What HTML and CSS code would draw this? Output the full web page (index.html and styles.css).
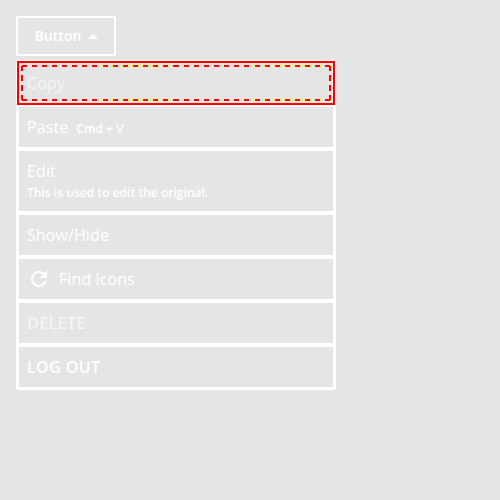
FILE: index.html
```html
<!DOCTYPE html>
<html lang="en">
<head>
<meta charset="utf-8">
<title>Menu</title>
<link rel="stylesheet" href="styles.css">
</head>
<body>
<button class="trigger">Button<svg class="caret" width="10" height="5" viewBox="0 0 10 5"><path d="M0 5L5 0l5 5z"/></svg></button>
<ul class="menu">
  <li class="item focused dim">Copy<svg class="ring" width="310" height="36" viewBox="0 0 310 36" aria-hidden="true"><path class="halo"/><path class="dash"/></svg></li>
  <li class="item">Paste<span class="shortcut">Cmd + V</span></li>
  <li class="item stacked">Edit<span class="description">This is used to edit the original.</span></li>
  <li class="item">Show/Hide</li>
  <li class="item"><svg class="icon" width="24" height="24" viewBox="0 0 24 24"><path d="M17.65 6.35A7.96 7.96 0 0 0 12 4a8 8 0 1 0 7.73 10h-2.08A6 6 0 1 1 12 6c1.66 0 3.14.69 4.22 1.78L13 11h7V4z"/></svg>Find icons</li>
  <li class="item strong dim">DELETE</li>
  <li class="item strong">LOG OUT</li>
</ul>
<script src="ring.js"></script>
</body>
</html>
```
FILE: ring.js
```js
// Dashes snap to whole pixels; the partly covered pixel at either end is the halo.
const rect = (x, y, w, h) => `M${x} ${y}h${w}v${h}h${-w}z`;
let halo = '', dash = '';
for (let k = 0; k < 31; k++) {
  const start = k * 304 / 30;
  const end = start + 6;
  const left = Math.ceil(start - 0.001);
  const right = Math.floor(end + 0.001);
  for (const y of [0, 34]) {
    dash += rect(left, y, right - left, 2);
    if (left - start > 0.22) halo += rect(left - 1, y, 1, 2);
    if (end - right > 0.22) halo += rect(right, y, 1, 2);
  }
}
for (let y = 0; y < 36; y += 10) {
  dash += rect(0, y, 2, 6) + rect(308, y, 2, 6);
}
document.querySelector('.dash').setAttribute('d', dash);
document.querySelector('.halo').setAttribute('d', halo);
const corners = document.createElementNS('http://www.w3.org/2000/svg', 'path');
corners.setAttribute('class', 'halo');
corners.setAttribute('d', [[0, 0], [309, 0], [0, 35], [309, 35]].map(([x, y]) => rect(x, y, 1, 1)).join(''));
document.querySelector('.ring').append(corners);
```
FILE: styles.css
```css
* { box-sizing: border-box; }
body {
  margin: 0;
  padding: 16px;
  background: #e5e5e5;
  color: #fff;
  font-family: "Open Sans", sans-serif;
}
.trigger {
  display: flex;
  align-items: center;
  justify-content: center;
  gap: 6px;
  width: 100px;
  height: 40px;
  padding: 0;
  border: 2px solid #fff;
  border-radius: 2px;
  background: transparent;
  color: inherit;
  font: 600 14px/20px "Open Sans", sans-serif;
  letter-spacing: 0.06px;
}
.caret, .icon { fill: currentColor; }
.menu {
  width: 320px;
  margin: 4px 0 0;
  padding: 0;
  border: 1px solid #fff;
  border-radius: 2px;
  list-style: none;
}
.item {
  position: relative;
  display: flex;
  align-items: center;
  min-height: 44px;
  padding: 8px;
  border: 2px solid #fff;
  font-size: 16px;
  line-height: 24px;
  letter-spacing: 0.1px;
}
.stacked { flex-direction: column; align-items: flex-start; }
.shortcut, .description { font-size: 12px; font-weight: 600; letter-spacing: 0.03px; }
.shortcut { margin: 2px 0 -2px 8px; }
.description { line-height: 20px; }
.icon { margin-right: 8px; }
.strong { font-weight: 600; letter-spacing: 0.4px; }
.dim { color: #f4f4f4; }
.focused { border-color: red; }
.ring { position: absolute; top: 2px; left: 2px; shape-rendering: crispEdges; }
.halo { fill: yellow; }
.dash { fill: red; }
```
